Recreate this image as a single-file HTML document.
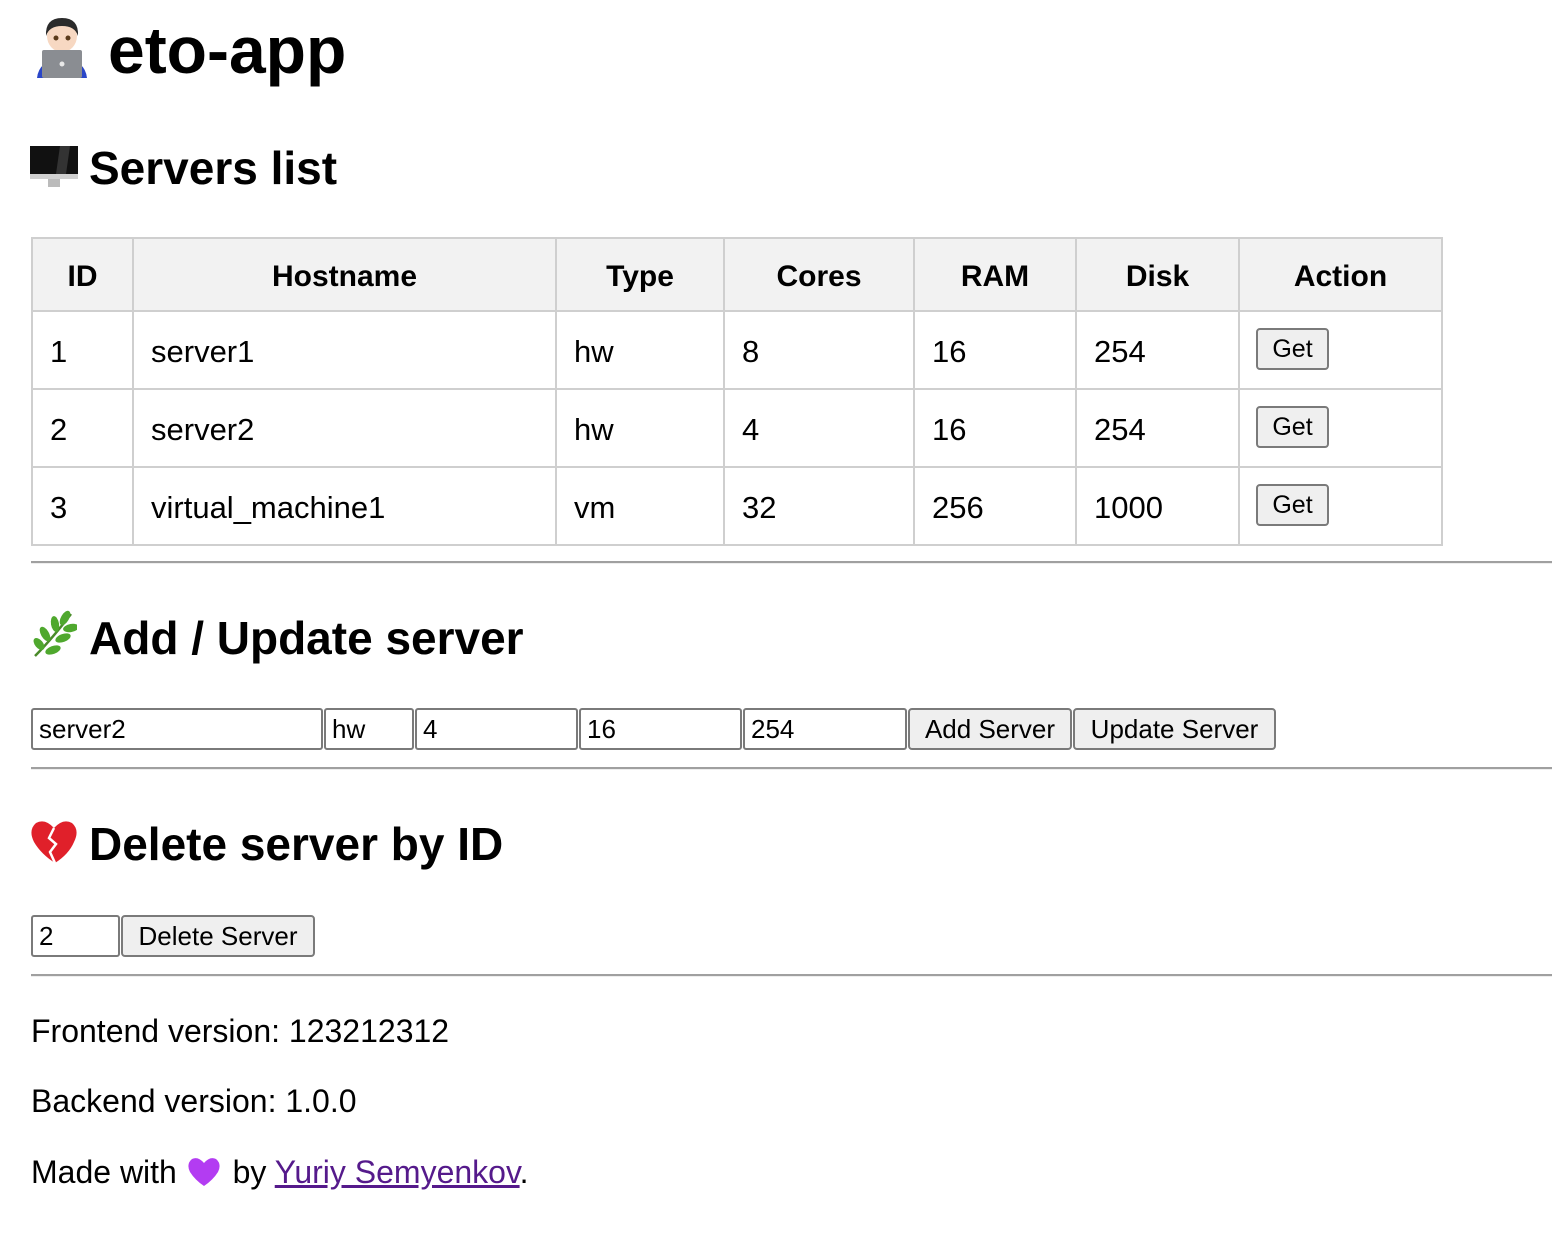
<!DOCTYPE html>
<html><head><meta charset="utf-8"><style>
body{margin:0;width:1552px;height:1234px;position:relative;background:#fff;font-family:"Liberation Sans",sans-serif;color:#000;overflow:hidden}
.a{position:absolute;line-height:1;white-space:nowrap}
h1,h2{margin:0;font-weight:bold}
.hr{position:absolute;left:31px;right:0;height:2px;background:#a0a0a0;border-bottom:1px solid #eee}
table{position:absolute;left:31px;top:237px;border-collapse:collapse;font-size:31px}
td,th{border:2px solid #cfcfcf;padding:4px 0 0 17px;text-align:left;height:74px;box-sizing:border-box}
td{height:78px}
th{background:#f2f2f2;text-align:center;padding:4px 0 0 0;font-size:30px;height:73px}
.btn{position:absolute;box-sizing:border-box;border:2px solid #7a7a7a;border-radius:4px;background:#efefef;font-size:26px;line-height:1;display:flex;align-items:center;justify-content:center;font-family:"Liberation Sans",sans-serif}
.in{position:absolute;box-sizing:border-box;border:2px solid #7a7a7a;border-radius:3px;background:#fff;font-size:26px;display:flex;align-items:center;padding-left:6px;height:42px}
.g{width:73px;height:42px;left:1256px;font-size:25px}
</style></head><body>

<svg class="a" style="left:33px;top:16px" width="58" height="62" viewBox="0 0 58 62">
<path d="M4 62 Q6 44 29 42 Q52 44 54 62Z" fill="#2a46c8"/>
<ellipse cx="29" cy="20" rx="15" ry="16" fill="#f7d8c2"/>
<path d="M13 20 Q12 2 29 2 Q46 2 45 20 Q42 10 29 10 Q16 10 13 20Z" fill="#2b2b2b"/>
<circle cx="23" cy="22" r="2.5" fill="#5a3a1a"/><circle cx="35" cy="22" r="2.5" fill="#5a3a1a"/>
<rect x="9" y="34" width="40" height="28" rx="2" fill="#8a8d92"/>
<circle cx="29" cy="48" r="2.5" fill="#e8e8e8"/>
</svg>
<h1 class="a" style="left:108px;top:17px;font-size:66px">eto-app</h1>

<svg class="a" style="left:30px;top:146px" width="48" height="42" viewBox="0 0 48 42">
<rect x="0" y="0" width="48" height="28" fill="#111"/><path d="M30 0 L40 0 L36 28 L26 28Z" fill="#333"/>
<rect x="0" y="28" width="48" height="5" fill="#d0d0d0"/><rect x="18" y="33" width="12" height="8" fill="#bbb"/>
</svg>
<h2 class="a" style="left:89px;top:145px;font-size:46px">Servers list</h2>

<table>
<tr><th style="width:101px">ID</th><th style="width:423px">Hostname</th><th style="width:168px">Type</th><th style="width:190px">Cores</th><th style="width:162px">RAM</th><th style="width:163px">Disk</th><th style="width:203px">Action</th></tr>
<tr><td>1</td><td>server1</td><td>hw</td><td>8</td><td>16</td><td>254</td><td></td></tr>
<tr><td>2</td><td>server2</td><td>hw</td><td>4</td><td>16</td><td>254</td><td></td></tr>
<tr><td>3</td><td>virtual_machine1</td><td>vm</td><td>32</td><td>256</td><td>1000</td><td></td></tr>
</table>
<div class="btn g" style="top:328px">Get</div>
<div class="btn g" style="top:406px">Get</div>
<div class="btn g" style="top:484px">Get</div>

<div class="hr" style="top:561px"></div>

<svg class="a" style="left:31px;top:610px" width="46" height="48" viewBox="0 0 46 48">
<path d="M4 46 Q20 30 40 4" stroke="#4a8a2a" stroke-width="2.5" fill="none"/>
<g fill="#4fa82e"><ellipse cx="34" cy="8" rx="4" ry="8" transform="rotate(30 34 8)"/><ellipse cx="40" cy="18" rx="4" ry="8" transform="rotate(80 40 18)"/><ellipse cx="24" cy="14" rx="4" ry="8" transform="rotate(-10 24 14)"/><ellipse cx="32" cy="28" rx="4" ry="8" transform="rotate(70 32 28)"/><ellipse cx="14" cy="24" rx="4" ry="8" transform="rotate(-30 14 24)"/><ellipse cx="22" cy="40" rx="4" ry="8" transform="rotate(70 22 40)"/><ellipse cx="8" cy="34" rx="4" ry="7" transform="rotate(-40 8 34)"/></g>
</svg>
<h2 class="a" style="left:89px;top:615px;font-size:46px">Add / Update server</h2>

<div class="in" style="left:31px;top:708px;width:292px">server2</div>
<div class="in" style="left:324px;top:708px;width:90px">hw</div>
<div class="in" style="left:415px;top:708px;width:163px">4</div>
<div class="in" style="left:579px;top:708px;width:163px">16</div>
<div class="in" style="left:743px;top:708px;width:164px">254</div>
<div class="btn" style="left:908px;top:708px;width:164px;height:42px">Add Server</div>
<div class="btn" style="left:1073px;top:708px;width:203px;height:42px">Update Server</div>

<div class="hr" style="top:767px"></div>

<svg class="a" style="left:31px;top:820px" width="46" height="44" viewBox="0 0 46 44">
<path d="M23 8 Q14 -2 5 3 Q-3 10 3 22 Q10 34 24 43 Q38 34 43 22 Q49 10 41 3 Q32 -2 23 8Z" fill="#e0202a"/>
<path d="M23 8 L18 18 L25 24 L19 32 L24 43" stroke="#fff" stroke-width="2.5" fill="none"/>
</svg>
<h2 class="a" style="left:89px;top:821px;font-size:46px">Delete server by ID</h2>

<div class="in" style="left:31px;top:915px;width:89px">2</div>
<div class="btn" style="left:121px;top:915px;width:194px;height:42px">Delete Server</div>

<div class="hr" style="top:974px"></div>

<div class="a" style="left:31px;top:1015px;font-size:32px">Frontend version: 123212312</div>
<div class="a" style="left:31px;top:1085px;font-size:32px">Backend version: 1.0.0</div>
<div class="a" style="left:31px;top:1156px;font-size:32px">Made with <svg width="32" height="30" viewBox="0 0 32 30" style="vertical-align:-4px;margin:0 4px 0 2px"><path d="M16 6 Q10 -1 4 2 Q-2 7 2 15 Q7 23 16 29 Q25 23 30 15 Q34 7 28 2 Q22 -1 16 6Z" fill="#b33cf2"/></svg> by <span style="color:#551a8b;text-decoration:underline">Yuriy Semyenkov</span>.</div>
</body></html>
